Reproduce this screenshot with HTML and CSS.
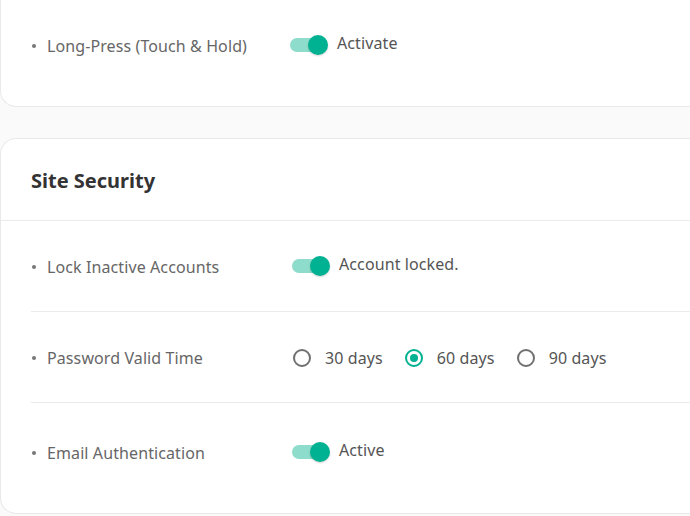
FILE: index.html
```html
<!DOCTYPE html>
<html>
<head>
<meta charset="utf-8">
<link rel="stylesheet" href="styles.css">
</head>
<body>
<div class="page">
  <section class="card card-top">
    <div class="row row-first">
      <div class="label"><span class="dot"></span>Long-Press (Touch &amp; Hold)</div>
      <div class="control control-a">
        <span class="switch"><span class="track"></span><span class="thumb"></span></span>
        <span class="value">Activate</span>
      </div>
    </div>
  </section>

  <section class="card card-security">
    <header class="card-head">
      <h2 class="title">Site Security</h2>
    </header>
    <div class="rows">
      <div class="row">
        <div class="label"><span class="dot"></span>Lock Inactive Accounts</div>
        <div class="control">
          <span class="switch"><span class="track"></span><span class="thumb"></span></span>
          <span class="value">Account locked.</span>
        </div>
      </div>
      <div class="row">
        <div class="label"><span class="dot"></span>Password Valid Time</div>
        <div class="control radios">
          <label class="radio"><span class="circle"></span><span class="value">30 days</span></label>
          <label class="radio checked"><span class="circle"></span><span class="value">60 days</span></label>
          <label class="radio"><span class="circle"></span><span class="value">90 days</span></label>
        </div>
      </div>
      <div class="row row-last">
        <div class="label"><span class="dot"></span>Email Authentication</div>
        <div class="control">
          <span class="switch"><span class="track"></span><span class="thumb"></span></span>
          <span class="value">Active</span>
        </div>
      </div>
    </div>
  </section>
</div>
</body>
</html>
```
FILE: styles.css
```css
html, body {
  margin: 0;
  padding: 0;
  background: #fafafa;
  overflow: hidden;
}
body {
  font-family: "Noto Sans", "Open Sans", sans-serif;
  font-size: 16px;
  color: #666;
  width: 690px;
  height: 516px;
}
.page {
  display: flex;
  flex-direction: column;
  gap: 31px;
  width: 690px;
}
.card {
  background: #fff;
  border: 1px solid #e9e9e9;
  border-right: none;
  border-radius: 16px 0 0 16px;
  box-sizing: border-box;
  width: 100%;
}
.card-top {
  margin-top: -21px;
  padding-top: 20px;
  padding-bottom: 16px;
}
.card-top .row {
  border-bottom: none;
  padding-left: 30px;
}
.card-head {
  height: 81px;
  display: flex;
  align-items: center;
  padding-left: 30px;
  border-bottom: 1px solid #ebebeb;
}
.title {
  margin: 0;
  font-size: 20px;
  font-weight: 700;
  color: #333;
  position: relative;
  top: 1px;
}
.rows {
  padding-left: 30px;
  padding-bottom: 10px;
}
.row {
  height: 90px;
  display: flex;
  align-items: center;
  border-bottom: 1px solid #ebebeb;
}
.row-last {
  border-bottom: none;
  height: 100px;
  padding-bottom: 3px;
  box-sizing: border-box;
}
.label {
  width: 261px;
  display: flex;
  align-items: center;
  color: #666;
  letter-spacing: 0.1px;
  position: relative;
  top: 1px;
}
.dot {
  width: 4px;
  height: 4px;
  border-radius: 50%;
  background: #777;
  margin-left: 1px;
  margin-right: 11px;
}
.control {
  display: flex;
  align-items: center;
  color: #555;
  letter-spacing: 0.1px;
}
.control-a {
  margin-left: -2px;
}
.value {
  position: relative;
  top: -2px;
}
.switch {
  position: relative;
  width: 38px;
  height: 20px;
  margin-right: 9px;
  flex: none;
}
.track {
  position: absolute;
  left: 0;
  top: 3px;
  width: 34px;
  height: 14px;
  border-radius: 7px;
  background: #8edccb;
}
.thumb {
  position: absolute;
  right: 0;
  top: 0;
  width: 20px;
  height: 20px;
  border-radius: 50%;
  background: #00b292;
  box-shadow: 0 1px 2px rgba(0,0,0,0.18);
}
.radios {
  gap: 21px;
  position: relative;
  top: 1px;
}
.radio {
  display: flex;
  align-items: center;
}
.radio .value {
  top: 0;
}
.circle {
  width: 14px;
  height: 14px;
  border: 2px solid #707070;
  border-radius: 50%;
  margin-right: 14px;
  margin-left: 1px;
  position: relative;
  flex: none;
}
.radio.checked .circle {
  border-color: #00b292;
}
.radio.checked .circle::after {
  content: "";
  position: absolute;
  left: 3px;
  top: 3px;
  width: 8px;
  height: 8px;
  border-radius: 50%;
  background: #00b292;
}
```
